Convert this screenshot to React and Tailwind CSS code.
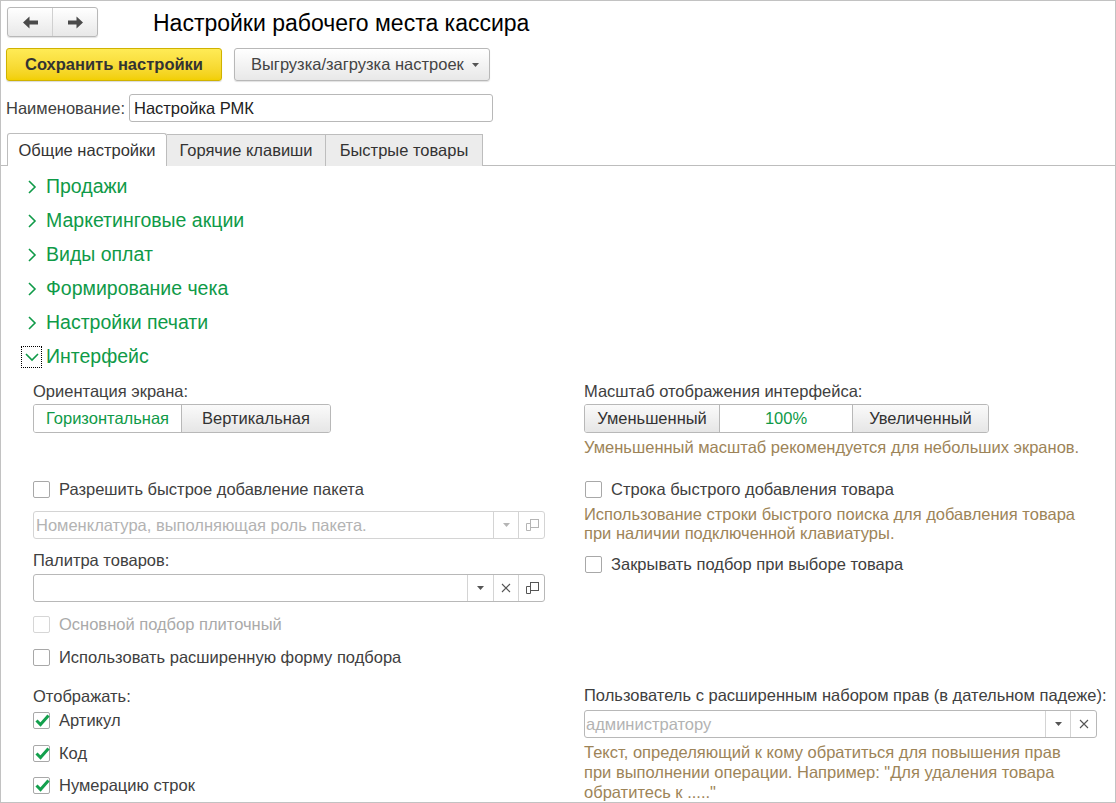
import React from 'react';

const ArrowLeft = () => (
    <svg width="17" height="13" viewBox="0 0 17 13">
        <path d="M1 6.5 L7.5 0.5 L7.5 4.5 L16 4.5 L16 8.5 L7.5 8.5 L7.5 12.5 Z" fill="#4a4a4a" />
    </svg>
);

const ArrowRight = () => (
    <svg width="17" height="13" viewBox="0 0 17 13">
        <path d="M16 6.5 L9.5 0.5 L9.5 4.5 L1 4.5 L1 8.5 L9.5 8.5 L9.5 12.5 Z" fill="#4a4a4a" />
    </svg>
);

const ChevronRight = () => (
    <svg width="10" height="14" viewBox="0 0 10 14">
        <path d="M2 1 L8 7 L2 13" fill="none" stroke="#0f9a48" strokeWidth="1.6" />
    </svg>
);

const ChevronDown = () => (
    <svg width="14" height="10" viewBox="0 0 14 10">
        <path d="M1 2 L7 8 L13 2" fill="none" stroke="#0f9a48" strokeWidth="1.6" />
    </svg>
);

const Caret = ({ light }) => (
    <svg width="7" height="4" viewBox="0 0 7 4">
        <path d="M0 0 L7 0 L3.5 4 Z" fill={light ? '#b5b5b5' : '#555'} />
    </svg>
);

const Cross = () => (
    <svg width="10" height="10" viewBox="0 0 10 10">
        <path d="M1 1 L9 9 M9 1 L1 9" stroke="#555" strokeWidth="1.1" />
    </svg>
);

const CopyIcon = ({ light }) => {
    const c = light ? '#b5b5b5' : '#555';
    return (
        <svg width="14" height="14" viewBox="0 0 14 14">
            <rect x="5.5" y="1.5" width="8" height="8" fill="none" stroke={c} />
            <path d="M5 5.5 H1.5 V12.5 H5.5 V10" fill="none" stroke={c} />
        </svg>
    );
};

const Check = () => (
    <svg width="15" height="13" viewBox="0 0 15 13" className="absolute left-[1px] top-[1px]">
        <path d="M1.5 6.5 L5.5 10.5 L13.5 1.5" fill="none" stroke="#13a04d" strokeWidth="3" />
    </svg>
);

const Checkbox = ({ label, checked, disabled }) => (
    <div className="flex items-center h-[20px]">
        <div className={`relative w-[17px] h-[17px] rounded-[2px] border bg-white ${disabled ? 'border-[#d6d6d6]' : 'border-[#a8a8a8]'}`}>
            {checked && <Check />}
        </div>
        <span className={`ml-[9px] ${disabled ? 'text-[#aaaaaa]' : 'text-[#404040]'}`}>{label}</span>
    </div>
);

const FieldBtn = ({ w, children }) => (
    <div className={`${w} h-full flex items-center justify-center border-l border-[#d4d4d4]`}>{children}</div>
);

const GroupRow = ({ title, open }) => (
    <div className="flex items-center h-[34px]">
        <div className={`w-[21px] h-[22px] ml-[20px] flex items-center justify-center ${open ? 'border border-dotted border-black' : ''}`}>
            {open ? <ChevronDown /> : <ChevronRight />}
        </div>
        <span className="ml-[4px] text-[19.5px] text-[#0f9a48]">{title}</span>
    </div>
);

const groups = ['Продажи', 'Маркетинговые акции', 'Виды оплат', 'Формирование чека', 'Настройки печати'];

const btnGray = 'border border-[#b8b8b8] rounded-[3px] bg-gradient-to-b from-[#ffffff] to-[#e8e8e8] shadow-[0_1px_1px_rgba(0,0,0,0.12)]';

export default function App() {
    return (
        <div className="w-[1116px] h-[803px] bg-white border border-[#c2c2c2] overflow-hidden text-[16.5px] text-[#404040] font-['Liberation_Sans',Arial,sans-serif]">
            {/* шапка */}
            <div className="flex items-center mt-[6px] ml-[6px] h-[30px]">
                <div className={`flex w-[91px] h-[30px] ${btnGray}`}>
                    <div className="w-[45px] flex items-center justify-center border-r border-[#d0d0d0]"><ArrowLeft /></div>
                    <div className="flex-1 flex items-center justify-center"><ArrowRight /></div>
                </div>
                <h1 className="ml-[55px] mt-[2px] text-[23px] text-black leading-none">Настройки рабочего места кассира</h1>
            </div>

            <div className="flex mt-[11px] ml-[5px] h-[33px]">
                <button className="w-[216px] h-full rounded-[3px] border border-[#cfb200] bg-gradient-to-b from-[#ffeb55] to-[#f2cf00] font-bold text-[#333] text-[16.5px] shadow-[0_1px_1px_rgba(0,0,0,0.15)]">
                    Сохранить настройки
                </button>
                <button className={`ml-[12px] w-[256px] h-full flex items-center pl-[16px] text-[16.5px] text-[#444] ${btnGray}`}>
                    Выгрузка/загрузка настроек
                    <span className="ml-[8px] mt-[1px]"><Caret /></span>
                </button>
            </div>

            <div className="flex items-center mt-[13px] ml-[5px] h-[28px]">
                <span className="text-[#404040]">Наименование:</span>
                <div className="ml-[4px] w-[364px] h-full border border-[#b8b8b8] rounded-[3px] flex items-center pl-[4px] text-[#222]">
                    Настройка РМК
                </div>
            </div>

            {/* вкладки */}
            <div className="flex mt-[11px] pl-[6px] h-[33px] border-b border-[#bdbdbd]">
                <div className="w-[160px] h-[33px] -mb-[1px] bg-white border border-b-0 border-[#bdbdbd] rounded-t-[3px] flex items-center justify-center text-[#333]">
                    Общие настройки
                </div>
                <div className="w-[159px] h-[32px] mt-[1px] bg-[#ececec] border border-l-0 border-b-0 border-[#bdbdbd] flex items-center justify-center text-[#333]">
                    Горячие клавиши
                </div>
                <div className="w-[157px] h-[32px] mt-[1px] bg-[#ececec] border border-l-0 border-b-0 border-[#bdbdbd] flex items-center justify-center text-[#333]">
                    Быстрые товары
                </div>
            </div>

            <div className="mt-[4px]">
                {groups.map((g) => <GroupRow key={g} title={g} />)}
                <GroupRow title="Интерфейс" open />
            </div>

            <div className="flex pl-[32px]">
                {/* левая колонка */}
                <div className="w-[512px] flex flex-col">
                    <div className="mt-[8px] h-[18px] leading-[18px]">Ориентация экрана:</div>
                    <div className="mt-[4px] flex h-[29px] w-[298px] border border-[#b8b8b8] rounded-[3px] overflow-hidden">
                        <div className="w-[147px] flex items-center justify-center bg-white text-[#0f9a48]">Горизонтальная</div>
                        <div className="flex-1 flex items-center justify-center border-l border-[#b8b8b8] bg-gradient-to-b from-[#fafafa] to-[#e6e6e6] text-[#333]">Вертикальная</div>
                    </div>

                    <div className="mt-[46px]"><Checkbox label="Разрешить быстрое добавление пакета" /></div>

                    <div className="mt-[12px] h-[28px] flex border border-[#d4d4d4] rounded-[3px]">
                        <div className="flex-1 flex items-center pl-[2px] text-[#b3b3b3]">Номенклатура, выполняющая роль пакета.</div>
                        <FieldBtn w="w-[25px]"><Caret light /></FieldBtn>
                        <FieldBtn w="w-[26px]"><CopyIcon light /></FieldBtn>
                    </div>

                    <div className="mt-[12px] h-[18px] leading-[18px]">Палитра товаров:</div>
                    <div className="mt-[5px] h-[28px] flex border border-[#b8b8b8] rounded-[3px]">
                        <div className="flex-1" />
                        <FieldBtn w="w-[26px]"><Caret /></FieldBtn>
                        <FieldBtn w="w-[25px]"><Cross /></FieldBtn>
                        <FieldBtn w="w-[26px]"><CopyIcon /></FieldBtn>
                    </div>

                    <div className="mt-[12px]"><Checkbox label="Основной подбор плиточный" disabled /></div>
                    <div className="mt-[13px]"><Checkbox label="Использовать расширенную форму подбора" /></div>

                    <div className="mt-[20px] h-[18px] leading-[18px]">Отображать:</div>
                    <div className="mt-[5px]"><Checkbox label="Артикул" checked /></div>
                    <div className="mt-[13px]"><Checkbox label="Код" checked /></div>
                    <div className="mt-[12px]"><Checkbox label="Нумерацию строк" checked /></div>
                </div>

                {/* правая колонка */}
                <div className="ml-[39px] w-[514px] flex flex-col">
                    <div className="mt-[8px] h-[18px] leading-[18px]">Масштаб отображения интерфейса:</div>
                    <div className="mt-[4px] flex h-[29px] w-[405px] border border-[#b8b8b8] rounded-[3px] overflow-hidden">
                        <div className="w-[134px] flex items-center justify-center bg-gradient-to-b from-[#fafafa] to-[#e6e6e6] text-[#333]">Уменьшенный</div>
                        <div className="w-[133px] flex items-center justify-center border-l border-[#b8b8b8] bg-white text-[#0f9a48]">100%</div>
                        <div className="flex-1 flex items-center justify-center border-l border-[#b8b8b8] bg-gradient-to-b from-[#fafafa] to-[#e6e6e6] text-[#333]">Увеличенный</div>
                    </div>
                    <div className="mt-[5px] h-[18px] leading-[18px] text-[#9d8458] whitespace-nowrap">Уменьшенный масштаб рекомендуется для небольших экранов.</div>

                    <div className="mt-[23px] pl-[1px]"><Checkbox label="Строка быстрого добавления товара" /></div>
                    <div className="mt-[6px] leading-[19px] text-[#9d8458] whitespace-nowrap">
                        Использование строки быстрого поиска для добавления товара<br />
                        при наличии подключенной клавиатуры.
                    </div>
                    <div className="mt-[11px] pl-[1px]"><Checkbox label="Закрывать подбор при выборе товара" /></div>

                    <div className="mt-[112px] h-[18px] leading-[18px] whitespace-nowrap">Пользователь с расширенным набором прав (в дательном падеже):</div>
                    <div className="mt-[6px] h-[28px] w-[513px] flex border border-[#b8b8b8] rounded-[3px]">
                        <div className="flex-1 flex items-center pl-[1px] text-[#b3b3b3]">администратору</div>
                        <FieldBtn w="w-[25px]"><Caret /></FieldBtn>
                        <FieldBtn w="w-[26px]"><Cross /></FieldBtn>
                    </div>
                    <div className="mt-[4px] leading-[20px] text-[#9d8458] whitespace-nowrap">
                        Текст, определяющий к кому обратиться для повышения прав<br />
                        при выполнении операции. Например: "Для удаления товара<br />
                        обратитесь к ....."
                    </div>
                </div>
            </div>
        </div>
    );
}
